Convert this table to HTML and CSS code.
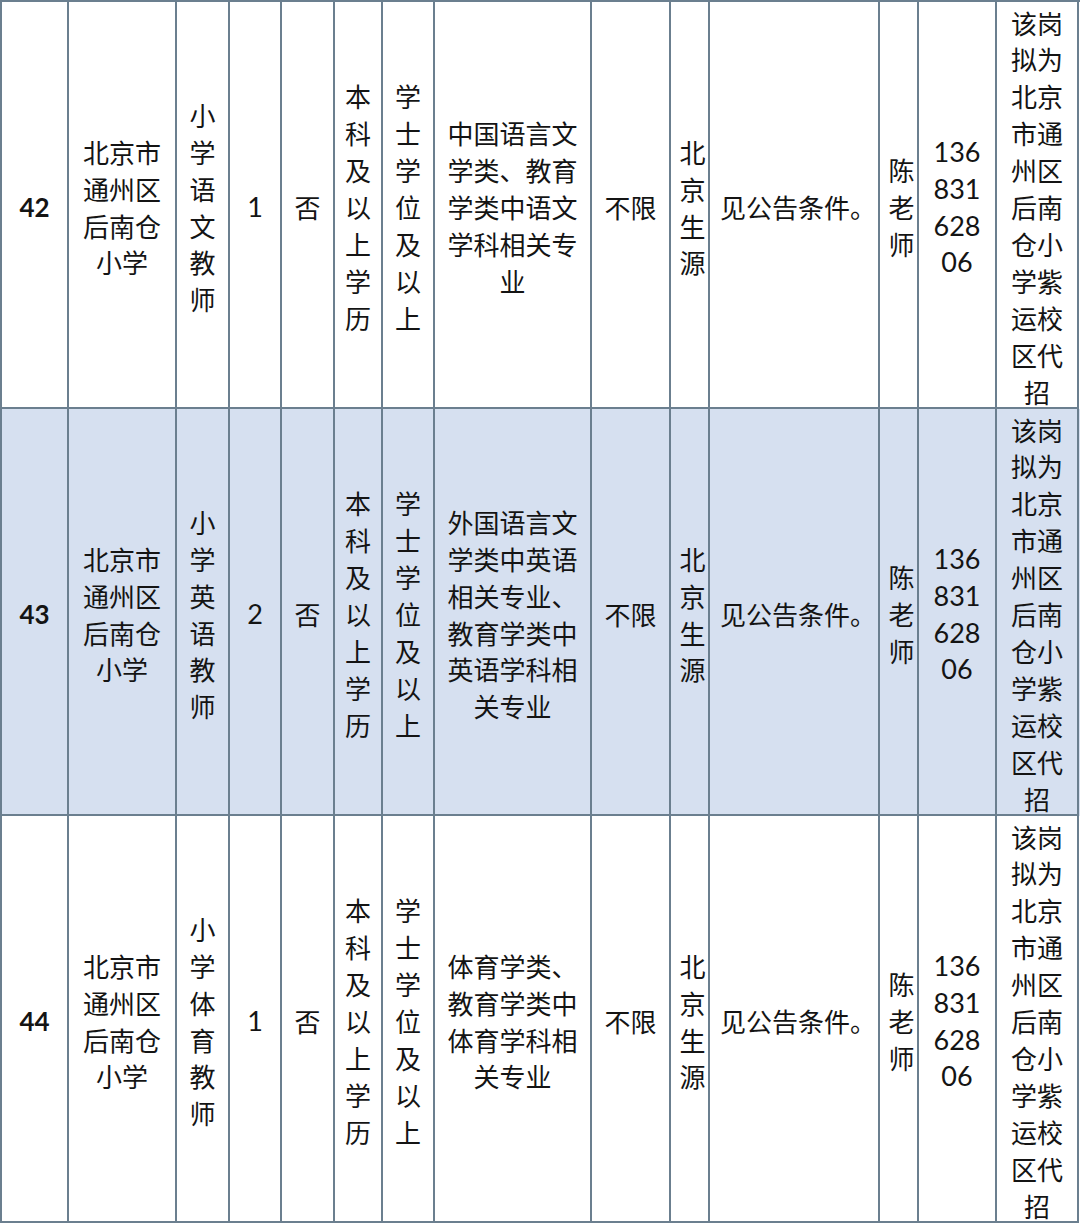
FILE: index.html
```html
<!DOCTYPE html>
<html lang="zh-CN">
<head>
<meta charset="utf-8">
<link rel="stylesheet" href="styles.css">
</head>
<body>
<div class="table">
  <div class="row">
    <div class="c no">42</div>
    <div class="c"><span class="w3">北京市通州区后南仓小学</span></div>
    <div class="c"><span class="w1">小学语文教师</span></div>
    <div class="c num">1</div>
    <div class="c">否</div>
    <div class="c"><span class="w1">本科及以上学历</span></div>
    <div class="c"><span class="w1">学士学位及以上</span></div>
    <div class="c"><span class="w5">中国语言文学类、教育学类中语文学科相关专业</span></div>
    <div class="c">不限</div>
    <div class="c nudge"><span class="w1">北京生源</span></div>
    <div class="c nudge2">见公告条件。</div>
    <div class="c nudge"><span class="w1">陈老师</span></div>
    <div class="c num">136<br>831<br>628<br>06</div>
    <div class="c"><span class="w2">该岗拟为北京市通州区后南仓小学紫运校区代招</span></div>
  </div>
  <div class="row alt">
    <div class="c no">43</div>
    <div class="c"><span class="w3">北京市通州区后南仓小学</span></div>
    <div class="c"><span class="w1">小学英语教师</span></div>
    <div class="c num">2</div>
    <div class="c">否</div>
    <div class="c"><span class="w1">本科及以上学历</span></div>
    <div class="c"><span class="w1">学士学位及以上</span></div>
    <div class="c"><span class="w5">外国语言文学类中英语相关专业、教育学类中英语学科相关专业</span></div>
    <div class="c">不限</div>
    <div class="c nudge"><span class="w1">北京生源</span></div>
    <div class="c nudge2">见公告条件。</div>
    <div class="c nudge"><span class="w1">陈老师</span></div>
    <div class="c num">136<br>831<br>628<br>06</div>
    <div class="c"><span class="w2">该岗拟为北京市通州区后南仓小学紫运校区代招</span></div>
  </div>
  <div class="row">
    <div class="c no">44</div>
    <div class="c"><span class="w3">北京市通州区后南仓小学</span></div>
    <div class="c"><span class="w1">小学体育教师</span></div>
    <div class="c num">1</div>
    <div class="c">否</div>
    <div class="c"><span class="w1">本科及以上学历</span></div>
    <div class="c"><span class="w1">学士学位及以上</span></div>
    <div class="c"><span class="w5">体育学类、教育学类中体育学科相关专业</span></div>
    <div class="c">不限</div>
    <div class="c nudge"><span class="w1">北京生源</span></div>
    <div class="c nudge2">见公告条件。</div>
    <div class="c nudge"><span class="w1">陈老师</span></div>
    <div class="c num">136<br>831<br>628<br>06</div>
    <div class="c"><span class="w2">该岗拟为北京市通州区后南仓小学紫运校区代招</span></div>
  </div>
</div>
</body>
</html>
```
FILE: styles.css
```css
html, body {
  margin: 0;
  padding: 0;
  background: #ffffff;
}
.table {
  width: 1079px;
  border-left: 2px solid #6b7f8f;
  border-top: 2px solid #6b7f8f;
  font-family: "Noto Sans CJK SC", "Noto Sans", sans-serif;
  font-size: 26px;
  line-height: 36.9px;
  color: #141414;
}
.row {
  display: grid;
  grid-template-columns: 67px 108px 53px 52px 53px 48px 52px 157px 79px 39px 170px 39px 78px 82px;
  height: 407px;
}
.row.alt {
  background: #d6e0f0;
}
.c {
  border-right: 2px solid #6b7f8f;
  border-bottom: 2px solid #6b7f8f;
  display: flex;
  align-items: center;
  justify-content: center;
  text-align: center;
  overflow: hidden;
  padding-top: 6px;
}
.nudge {
  padding-left: 6px;
}
.nudge2 {
  padding-left: 8px;
}
.no {
  font-family: Lato, "Open Sans", sans-serif;
  font-weight: 700;
  font-size: 26px;
}
.num {
  font-family: Lato, "Open Sans", sans-serif;
  font-size: 27px;
}
.w1, .w2, .w3, .w5 {
  display: block;
  word-break: break-all;
  line-break: anywhere;
}
.w1 { width: 1em; }
.w2 { width: 2em; }
.w3 { width: 3em; }
.w5 { width: 5em; }
```
